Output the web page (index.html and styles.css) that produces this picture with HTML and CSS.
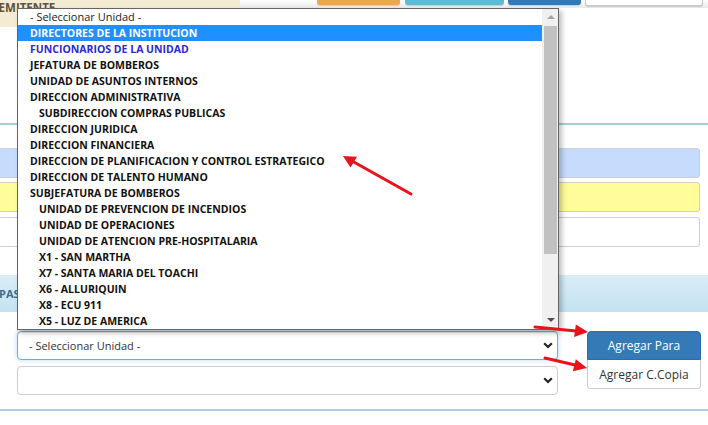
FILE: index.html
```html
<!DOCTYPE html>
<html lang="es">
<head>
    <meta charset="UTF-8">
    <title>Documentos - Destinatarios</title>
    <link rel="stylesheet" href="styles.css">
</head>
<body>

    <div class="top">
        <div class="heading-beige"><span>REMITENTE</span></div>
        <div class="toolbar">
            <span class="tb-btn tb-orange"></span>
            <span class="tb-btn tb-teal"></span>
            <span class="tb-btn tb-blue"></span>
            <span class="tb-btn tb-white"></span>
        </div>
    </div>

    <div class="rule-teal"></div>

    <div class="fields">
        <div class="field f-blue"></div>
        <div class="field f-yellow"></div>
        <div class="field f-white"></div>
    </div>

    <div class="panel-blue"><span>PASE</span></div>

    <div class="form-row">
        <div class="selects">
            <div class="select-wrap">
                <select class="select-box focused">
                    <option>- Seleccionar Unidad -</option>
                </select>
                <svg class="chevron" width="10" height="7" viewBox="0 0 10 7"><path d="M1.2 1.2l3.8 3.8 3.8-3.8" fill="none" stroke="#222" stroke-width="2.2"/></svg>
            </div>
            <div class="select-wrap second">
                <select class="select-box">
                    <option></option>
                </select>
                <svg class="chevron" width="10" height="7" viewBox="0 0 10 7"><path d="M1.2 1.2l3.8 3.8 3.8-3.8" fill="none" stroke="#222" stroke-width="2.2"/></svg>
            </div>
        </div>
        <div class="buttons">
            <button type="button" class="btn-para">Agregar Para</button>
            <button type="button" class="btn-copia">Agregar C.Copia</button>
        </div>
    </div>

    <div class="rule-blue"></div>

    <!-- lista desplegada del primer select -->
    <div class="dropdown">
        <ul class="options">
            <li class="plain">- Seleccionar Unidad -</li>
            <li class="selected">DIRECTORES DE LA INSTITUCION</li>
            <li class="group">FUNCIONARIOS DE LA UNIDAD</li>
            <li>JEFATURA DE BOMBEROS</li>
            <li>UNIDAD DE ASUNTOS INTERNOS</li>
            <li>DIRECCION ADMINISTRATIVA</li>
            <li class="sub">SUBDIRECCION COMPRAS PUBLICAS</li>
            <li>DIRECCION JURIDICA</li>
            <li>DIRECCION FINANCIERA</li>
            <li>DIRECCION DE PLANIFICACION Y CONTROL ESTRATEGICO</li>
            <li>DIRECCION DE TALENTO HUMANO</li>
            <li>SUBJEFATURA DE BOMBEROS</li>
            <li class="sub">UNIDAD DE PREVENCION DE INCENDIOS</li>
            <li class="sub">UNIDAD DE OPERACIONES</li>
            <li class="sub">UNIDAD DE ATENCION PRE-HOSPITALARIA</li>
            <li class="sub">X1 - SAN MARTHA</li>
            <li class="sub">X7 - SANTA MARIA DEL TOACHI</li>
            <li class="sub">X6 - ALLURIQUIN</li>
            <li class="sub">X8 - ECU 911</li>
            <li class="sub">X5 - LUZ DE AMERICA</li>
        </ul>
        <div class="scrollbar">
            <span class="arrow-up"></span>
            <span class="thumb"></span>
            <span class="arrow-down"></span>
        </div>
    </div>

    <!-- flechas de anotacion -->
    <svg class="marks" width="708" height="425" viewBox="0 0 708 425">
        <g stroke="#e8141b" stroke-width="3" stroke-linecap="round">
            <line x1="411" y1="194" x2="352" y2="161"/>
            <line x1="535" y1="327" x2="576" y2="331"/>
            <line x1="545" y1="358" x2="575" y2="365"/>
        </g>
        <g fill="#e8141b">
            <polygon points="343,156 357,156.8 350.5,167.5"/>
            <polygon points="588,332 574.2,337 575.8,324.5"/>
            <polygon points="587,368 572.8,371.3 575.8,359.2"/>
        </g>
    </svg>

</body>
</html>
```

FILE: styles.css
```css
body {
    margin: 0;
    width: 708px;
    height: 425px;
    overflow: hidden;
    position: relative;
    background: #fff;
    font-family: 'Open Sans', 'Noto Sans', sans-serif;
    color: #333;
}

.top {
    display: flex;
    align-items: flex-start;
    height: 27px;
}

.heading-beige {
    width: 240px;
    height: 27px;
    background-color: #f4ebd3;
    overflow: hidden;
}

.heading-beige span {
    display: block;
    margin-left: -9px;
    margin-top: 1px;
    font-size: 11.5px;
    font-weight: bold;
    line-height: 14px;
    color: #5e5240;
}

.toolbar {
    flex: 1;
    height: 8px;
    display: flex;
    align-items: flex-start;
    padding-left: 77px;
    background: linear-gradient(#ffffff, #e9e9e9);
}

.tb-btn {
    display: block;
    height: 5px;
    margin-right: 4px;
    border-radius: 0 0 3px 3px;
    box-shadow: 0 1px 1px rgba(0, 0, 0, 0.15);
}

.tb-orange {
    width: 83px;
    margin-right: 5px;
    background-color: #eba94e;
}

.tb-teal {
    width: 99px;
    background-color: #5bbcd6;
}

.tb-blue {
    width: 73px;
    background-color: #3379b5;
}

.tb-white {
    width: 116px;
    background-color: #fff;
    border: 1px solid #c8c8c8;
    border-top: none;
}

.rule-teal {
    margin-top: 96px;
    height: 2px;
    background-color: #a4cdd6;
}

.fields {
    margin-top: 23px;
    margin-left: -6px;
    width: 706px;
    padding-bottom: 1px;
}

.field {
    height: 28px;
    border: 1px solid #cfcfcf;
    border-radius: 3px;
    margin-bottom: 5px;
}

.f-blue {
    background-color: #c6dcfc;
    margin-bottom: 4px;
}

.f-yellow {
    background-color: #fefd99;
}

.f-white {
    background-color: #fff;
    margin-bottom: 0;
}

.panel-blue {
    margin-top: 27px;
    height: 37px;
    background: linear-gradient(#d9edf7, #c4e2f1);
    display: flex;
    align-items: center;
}

.panel-blue span {
    margin-left: -1px;
    font-size: 11px;
    font-weight: bold;
    color: #3b6f8c;
}

.form-row {
    display: flex;
    margin-top: 19px;
}

.selects {
    margin-left: 17px;
    width: 541px;
}

.select-wrap {
    position: relative;
}

.select-wrap.second {
    margin-top: 6px;
}

.select-box {
    display: block;
    width: 100%;
    height: 29px;
    margin: 0;
    padding: 0 0 0 11px;
    border: 1px solid #cccccc;
    border-radius: 4px;
    background-color: #fff;
    font-family: 'Open Sans', 'Noto Sans', sans-serif;
    font-size: 11px;
    color: #333;
    appearance: none;
    -webkit-appearance: none;
}

.select-box.focused {
    border-color: #66afe9;
    box-shadow: inset 0 1px 1px rgba(0, 0, 0, 0.075), 0 0 5px rgba(102, 175, 233, 0.5);
}

.chevron {
    position: absolute;
    right: 5px;
    top: 11px;
}

.buttons {
    margin-left: 29px;
    width: 114px;
}

.buttons button {
    display: block;
    width: 114px;
    height: 29px;
    margin: 0;
    padding: 0;
    font-family: 'Open Sans', 'Noto Sans', sans-serif;
    font-size: 12px;
    cursor: pointer;
}

.btn-para {
    background-color: #337ab7;
    border: 1px solid #2e6da4;
    border-radius: 4px 4px 0 0;
    color: #fff;
}

.btn-copia {
    background-color: #fff;
    border: 1px solid #cccccc;
    border-top: none;
    border-radius: 0 0 4px 4px;
    color: #333;
}

.rule-blue {
    margin-top: 14px;
    height: 2px;
    background-color: #a6d0f2;
}

/* lista abierta */
.dropdown {
    position: absolute;
    left: 17px;
    top: 8px;
    width: 540px;
    height: 320px;
    display: flex;
    background: #fff;
    border: 1px solid #646464;
    box-shadow: 3px 3px 5px rgba(0, 0, 0, 0.25);
}

.options {
    flex: 1;
    margin: 0;
    padding: 0;
    list-style: none;
}

.options li {
    height: 16px;
    line-height: 16px;
    padding-left: 12px;
    font-size: 10.5px;
    font-weight: bold;
    color: #111;
    white-space: nowrap;
}

.options li.plain {
    font-weight: normal;
    font-size: 11px;
    color: #222;
}

.options li.selected {
    background-color: #1e90ff;
    color: #fff;
}

.options li.group {
    color: #2a2ad0;
}

.options li.sub {
    padding-left: 21px;
}

.scrollbar {
    width: 16px;
    background-color: #f0f0f0;
    position: relative;
}

.thumb {
    position: absolute;
    left: 2px;
    top: 17px;
    width: 13px;
    height: 228px;
    background-color: #c1c1c1;
}

.arrow-up,
.arrow-down {
    position: absolute;
    left: 5px;
    width: 0;
    height: 0;
    border-left: 4px solid transparent;
    border-right: 4px solid transparent;
}

.arrow-up {
    top: 6px;
    border-bottom: 4px solid #a3a3a3;
}

.arrow-down {
    bottom: 7px;
    border-top: 4px solid #505050;
}

.marks {
    position: absolute;
    left: 0;
    top: 0;
    pointer-events: none;
}
```
